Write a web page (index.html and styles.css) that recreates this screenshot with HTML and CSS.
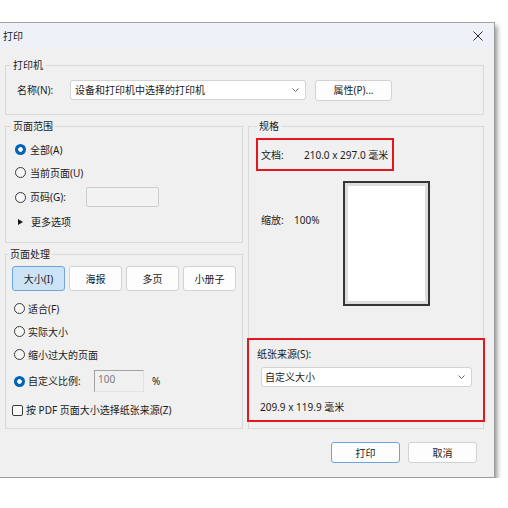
FILE: index.html
```html
<!DOCTYPE html>
<html lang="zh-CN">
<head>
<meta charset="utf-8">
<title>打印</title>
<link rel="stylesheet" href="styles.css">
</head>
<body>
<div class="dialog">
  <div class="titlebar">
    <span class="title">打印</span>
    <svg class="close" width="10" height="10" viewBox="0 0 10 10"><path d="M0.5 0.5L9.5 9.5M9.5 0.5L0.5 9.5"/></svg>
  </div>
  <div class="content">
    <fieldset class="group printer">
      <legend>打印机</legend>
      <div class="printer-row">
        <span class="name-label">名称(N):</span>
        <div class="select printer-select">
          <span>设备和打印机中选择的打印机</span>
          <svg class="chev" width="7" height="4" viewBox="0 0 7 4"><path d="M0.5 0.5L3.5 3.5L6.5 0.5"/></svg>
        </div>
        <button class="btn props">属性(P)...</button>
      </div>
    </fieldset>

    <div class="columns">
      <div class="col-left">
        <fieldset class="group range">
          <legend>页面范围</legend>
          <div class="rows">
            <div class="row"><span class="radio on"></span><span>全部(A)</span></div>
            <div class="row"><span class="radio"></span><span>当前页面(U)</span></div>
            <div class="row tall"><span class="radio"></span><span class="pages-label">页码(G):</span><span class="field pages-field"></span></div>
            <div class="row"><span class="tri"></span><span>更多选项</span></div>
          </div>
        </fieldset>

        <fieldset class="group handling">
          <legend>页面处理</legend>
          <div class="modes">
            <button class="btn mode active">大小(I)</button>
            <button class="btn mode">海报</button>
            <button class="btn mode">多页</button>
            <button class="btn mode">小册子</button>
          </div>
          <div class="rows fit">
            <div class="row"><span class="radio"></span><span>适合(F)</span></div>
            <div class="row"><span class="radio"></span><span>实际大小</span></div>
            <div class="row"><span class="radio"></span><span>缩小过大的页面</span></div>
            <div class="row custom"><span class="radio on"></span><span class="custom-label">自定义比例:</span><span class="field sunken">100</span><span class="pct">%</span></div>
            <div class="row check-row"><span class="checkbox"></span><span>按 PDF 页面大小选择纸张来源(Z)</span></div>
          </div>
        </fieldset>
      </div>

      <fieldset class="group spec">
        <legend>规格</legend>
        <div class="mark doc">
          <span class="doc-label">文档:</span><span>210.0 x 297.0 毫米</span>
        </div>
        <div class="scale-row">
          <div class="scale-info"><span class="scale-label">缩放:</span><span>100%</span></div>
          <div class="preview"></div>
        </div>
        <div class="mark source">
          <div class="source-label">纸张来源(S):</div>
          <div class="select source-select">
            <span>自定义大小</span>
            <svg class="chev" width="7" height="4" viewBox="0 0 7 4"><path d="M0.5 0.5L3.5 3.5L6.5 0.5"/></svg>
          </div>
          <div class="source-size">209.9 x 119.9 毫米</div>
        </div>
      </fieldset>
    </div>

    <div class="actions">
      <button class="btn default">打印</button>
      <button class="btn">取消</button>
    </div>
  </div>
</div>
</body>
</html>
```

FILE: styles.css
```css
html, body {
  margin: 0;
  padding: 0;
  background: #ffffff;
}

body {
  font-family: "Noto Sans", "Noto Sans CJK SC", sans-serif;
  font-size: 10px;
  line-height: 12px;
  color: #1b1b1b;
}

.dialog {
  box-sizing: border-box;
  width: 495px;
  margin-top: 22px;
  border-top: 1px solid #a3a3a3;
  border-right: 1px solid #9c9c9c;
  border-bottom: 1px solid #9c9c9c;
  background: #f0f0f0;
  box-shadow: 2px 4px 5px rgba(0, 0, 0, 0.45);
}

/* window caption */
.titlebar {
  height: 25px;
  background: #eef2f8;
  display: flex;
  align-items: center;
  justify-content: space-between;
  padding: 1px 11px 0 3px;
  box-sizing: border-box;
}

.close path {
  stroke: #2a2a2a;
  stroke-width: 1;
  fill: none;
}

.content {
  padding: 11px 10px 14px 5px;
}

/* group boxes */
.group {
  margin: 0;
  padding: 0;
  min-width: 0;
  border: 1px solid #d9d9d9;
}

.group legend {
  padding: 0 2px;
  margin-left: 5px;
  line-height: 12px;
}

.printer-row {
  display: flex;
  align-items: center;
  height: 22px;
  padding: 8px 0 13px 11px;
}

.name-label {
  width: 53px;
}

.select {
  box-sizing: border-box;
  height: 20px;
  background: #ffffff;
  border: 1px solid #d3d3d3;
  border-radius: 3px;
  display: flex;
  align-items: center;
  justify-content: space-between;
  padding: 0 6px 0 4px;
}

.chev path {
  stroke: #6b6b6b;
  stroke-width: 1;
  fill: none;
}

.printer-select {
  width: 236px;
  margin-right: 9px;
}

.btn {
  font: inherit;
  color: #1b1b1b;
  box-sizing: border-box;
  padding: 0;
  background: #fdfdfd;
  border: 1px solid #d2d2d2;
  border-radius: 3px;
  height: 21px;
}

.props {
  width: 77px;
}

.columns {
  display: grid;
  grid-template-columns: 238px 1fr;
  column-gap: 5px;
  margin-top: 5px;
}

.col-left {
  display: flex;
  flex-direction: column;
}

.rows {
  display: flex;
  flex-direction: column;
}

.row {
  display: flex;
  align-items: center;
  height: 23px;
}

.range .rows {
  padding: 6px 0 9px 9px;
}

.range .row.tall {
  height: 26px;
}

.radio {
  box-sizing: border-box;
  width: 11px;
  height: 11px;
  border: 1px solid #3b3b3b;
  border-radius: 50%;
  background: #f7f7f7;
  margin-right: 4px;
  flex: none;
}

.radio.on {
  border: none;
  background: radial-gradient(circle, #ffffff 0 2px, #0063b8 2.6px);
}

.pages-label {
  width: 56px;
}

.field {
  box-sizing: border-box;
  height: 20px;
  background: #f2f2f2;
  border: 1px solid #cdcdcd;
  border-radius: 2px;
}

.pages-field {
  width: 73px;
}

.tri {
  width: 0;
  height: 0;
  border-top: 3.5px solid transparent;
  border-bottom: 3.5px solid transparent;
  border-left: 5px solid #1b1b1b;
  margin: 0 8px 0 3px;
}

.handling {
  margin-top: 5px;
  flex: 1;
}

.handling legend {
  margin-left: 2px;
}

.modes {
  display: grid;
  grid-template-columns: repeat(4, 1fr);
  column-gap: 4px;
  padding: 6px 6px 0 6px;
}

.mode {
  height: 25px;
}

.mode.active {
  background: #cce3f6;
  border-color: #6ea6d9;
}

.fit {
  padding: 6px 0 4px 8px;
}

.fit .radio {
  margin-right: 3px;
}

.row.custom {
  height: 30px;
}

.custom-label {
  width: 66px;
}

.sunken {
  width: 50px;
  height: 22px;
  border-radius: 0;
  border-top: 1px solid #a2a2a2;
  border-left: 1px solid #a2a2a2;
  border-right: 1px solid #e2e2e2;
  border-bottom: 1px solid #e2e2e2;
  background: #f0f0f0;
  color: #7a7a7a;
  padding: 2px 0 0 3px;
}

.pct {
  margin-left: 8px;
}

.row.check-row {
  height: 28px;
  margin-left: -2px;
}

.checkbox {
  box-sizing: border-box;
  width: 11px;
  height: 11px;
  border: 1px solid #3b3b3b;
  border-radius: 2px;
  background: #fbfbfb;
  margin-right: 3px;
}

/* layout preview column */
.spec legend {
  margin-left: 8px;
}

.mark {
  box-sizing: border-box;
  border: 2px solid #e3161c;
}

.doc {
  width: 138px;
  height: 33px;
  margin: 6px 0 0 7px;
  display: flex;
  align-items: center;
  padding-left: 3px;
}

.doc-label {
  width: 43px;
}

.scale-row {
  display: flex;
  margin-top: 10px;
}

.scale-info {
  box-sizing: border-box;
  width: 94px;
  padding: 33px 0 0 12px;
}

.scale-label {
  display: inline-block;
  width: 33px;
}

.preview {
  box-sizing: border-box;
  width: 87px;
  height: 125px;
  border: 2px solid #353535;
  background: #ffffff;
  box-shadow: inset 0 0 0 3px #dddddd;
}

.source {
  height: 84px;
  margin: 32px -2px 0 -2px;
  padding: 8px 0 0 8px;
}

.source-select {
  width: 211px;
  margin: 7px 0 0 4px;
  padding-left: 3px;
}

.source-size {
  margin: 14px 0 0 3px;
}

.actions {
  display: flex;
  justify-content: flex-end;
  gap: 8px;
  margin-top: 13px;
  padding-right: 7px;
}

.actions .btn {
  width: 69px;
}

.btn.default {
  border-color: #6fa3d8;
}
```
